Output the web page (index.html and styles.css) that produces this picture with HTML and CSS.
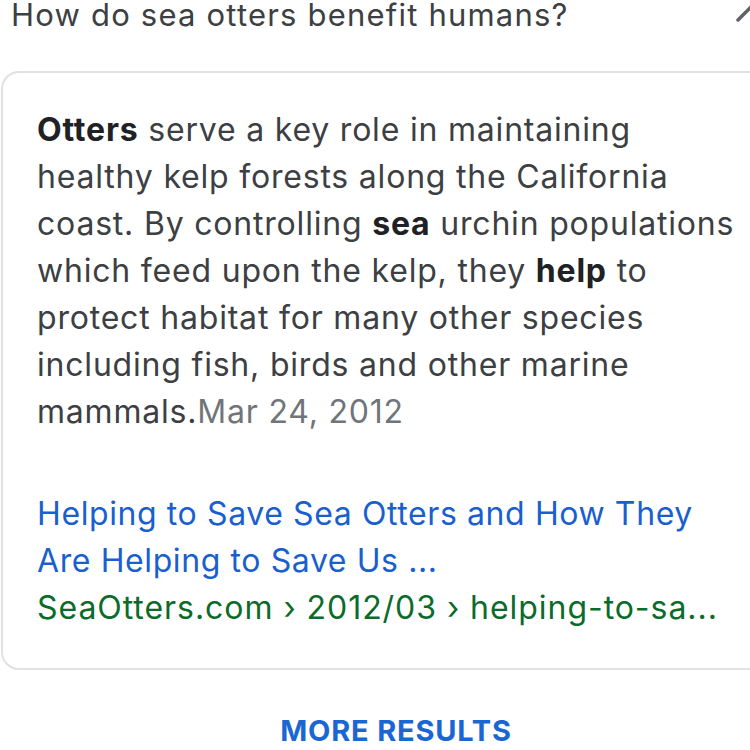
FILE: index.html
```html
<!DOCTYPE html>
<html>
<head>
<meta charset="utf-8">
<link rel="stylesheet" href="styles.css">
</head>
<body>
<div class="page">
  <div class="question">
    <span class="q-text">How do sea otters benefit humans?</span>
    <svg class="chev" width="40" height="24" viewBox="0 0 40 24"><path d="M4 20 L20 4 L36 20" fill="none" stroke="#5f6368" stroke-width="3.5" stroke-linecap="round" stroke-linejoin="round"/></svg>
  </div>
  <div class="card">
    <p class="snippet"><b>Otters</b> serve a key role in maintaining<br>healthy kelp forests along the California<br>coast. By controlling <b>sea</b> urchin populations<br>which feed upon the kelp, they <b>help</b> to<br>protect habitat for many other species<br>including fish, birds and other marine<br>mammals.<span class="date">Mar 24, 2012</span></p>
    <a class="title" href="#">Helping to Save Sea Otters and How They<br>Are Helping to Save Us ...</a>
    <div class="url">SeaOtters.com › 2012/03 › helping-to-sa...</div>
  </div>
  <div class="more">MORE RESULTS</div>
</div>
</body>
</html>
```
FILE: styles.css
```css
html, body {
  margin: 0;
  padding: 0;
  background: #ffffff;
  overflow: hidden;
  width: 750px;
  height: 750px;
}
.page {
  width: 792px;
  font-family: "Inter", "Liberation Sans", Arial, sans-serif;
}
.question {
  position: relative;
  height: 30px;
  padding-left: 11px;
  font-size: 31px;
  line-height: 30px;
  letter-spacing: 1.2px;
  color: #3c4043;
}
.chev {
  position: absolute;
  left: 734px;
  top: 0px;
}
.card {
  margin-top: 41px;
  margin-left: 1px;
  border: 2px solid #e0e1e3;
  border-radius: 18px;
  padding: 33px 0 37px 34px;
}
.snippet {
  margin: 0;
  font-size: 32px;
  line-height: 47px;
  letter-spacing: 0.8px;
  color: #3c4043;
  white-space: nowrap;
}
.snippet b {
  color: #202124;
  font-weight: bold;
}
.date {
  color: #70757a;
}
.title {
  display: block;
  margin-top: 55px;
  font-size: 32px;
  line-height: 47px;
  letter-spacing: 0.6px;
  color: #1a5fce;
  text-decoration: none;
  white-space: nowrap;
}
.url {
  font-size: 32px;
  line-height: 47px;
  letter-spacing: 0.95px;
  color: #0b6b2a;
  white-space: nowrap;
}
.more {
  margin-top: 41px;
  text-align: center;
  font-size: 29px;
  font-weight: bold;
  letter-spacing: 0.8px;
  color: #1a66d2;
  line-height: 40px;
}
```
